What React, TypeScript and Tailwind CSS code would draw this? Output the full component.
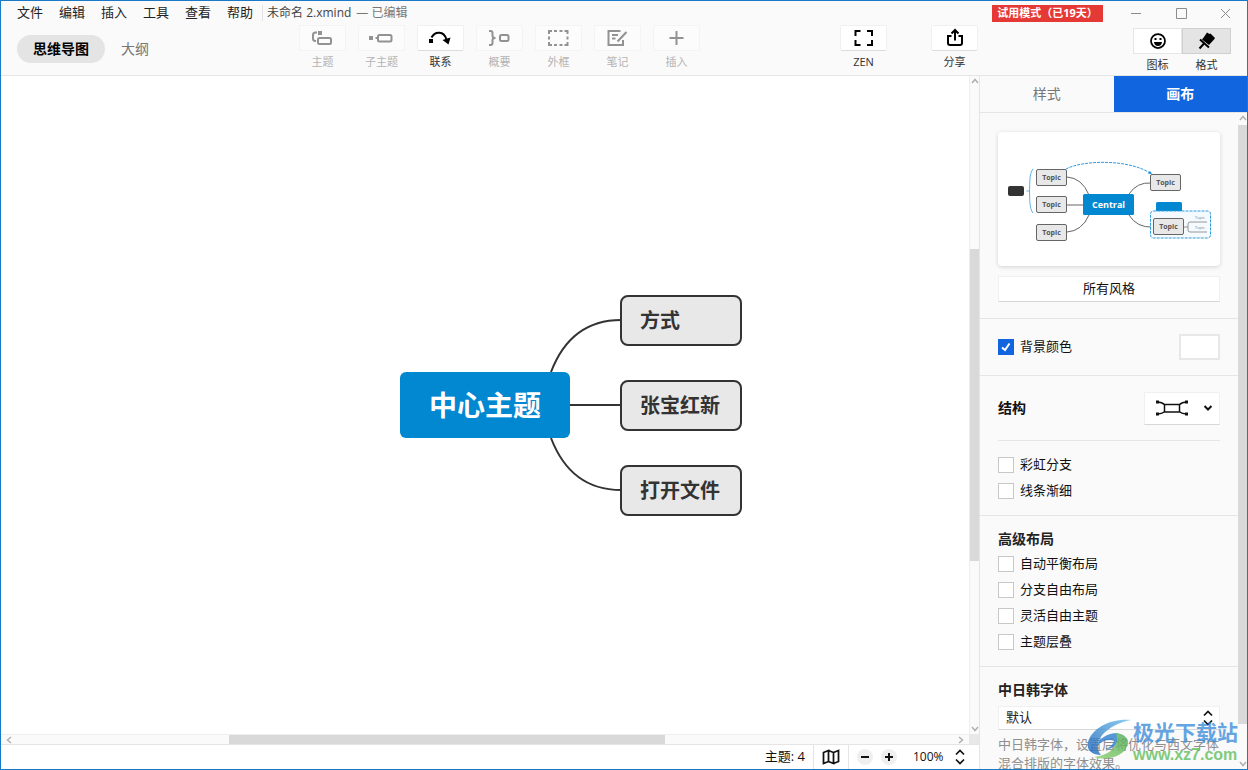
import React, { useState } from 'react';

interface ToolItem {
    label: string;
    active?: boolean;
    icon: React.ReactNode;
}

const TOOLS: ToolItem[] = [
    {
        label: '主题',
        icon: (
            <>
                <path d="M6 4.500H4.500Q2 4.500 2 7V10.500Q2 13 4.500 13H5" />
                <rect x="7" y="10" width="13" height="6" rx="1.500" />
                <rect x="7" y="3" width="4" height="4" fill="currentColor" stroke="none" />
            </>
        ),
    },
    {
        label: '子主题',
        icon: (
            <>
                <rect x="8" y="7" width="13.500" height="6.500" rx="1.500" />
                <path d="M5.500 10H8" />
                <rect x="-1" y="8" width="4" height="4" fill="currentColor" stroke="none" />
            </>
        ),
    },
    {
        label: '联系',
        active: true,
        icon: (
            <>
                <path d="M2.500 9.500C6 3 15 2.500 17.500 11.500" />
                <rect x="0" y="11" width="4" height="4" fill="currentColor" stroke="none" />
                <path d="M13.500 12L21.500 9.500L19.500 16.500Z" fill="currentColor" stroke="none" />
            </>
        ),
    },
    {
        label: '概要',
        icon: (
            <>
                <path d="M1 3H2.500Q4.500 3 4.500 5V8Q4.500 10 7.500 10Q4.500 10 4.500 12V15Q4.500 17 2.500 17H1" />
                <rect x="12" y="7" width="8.500" height="6" rx="1.500" />
            </>
        ),
    },
    {
        label: '外框',
        icon: <path d="M5 3H2V6M2 8.500V11.500M2 14V17H5M7 17H10M12.500 17H15.500M17.500 17H20.500V14M20.500 11.500V8.500M20.500 6V3H17.500M15.500 3H12.500M10 3H7" />,
    },
    {
        label: '笔记',
        icon: <path d="M14.500 3H2.500V17H17V12M6 7H12M6 10.500H9.500M20.500 4L11.500 13.500" />,
    },
    { label: '插入', icon: <path d="M11.500 3V17M4.500 10H18.500" /> },
];

const MENUS = ['文件', '编辑', '插入', '工具', '查看', '帮助'];

const ToolButton: React.FC<{ item: ToolItem }> = ({ item }) => {
    const { label, icon, active } = item;
    return (
        <button disabled={!active} className={`flex w-[47px] flex-col items-center ${active ? 'text-black' : 'text-[#929292]'}`}>
            <span className={`flex h-[26px] w-full items-center justify-center rounded-xs border ${active ? 'border-[#f0f0f0] border-b-[#dcdcdc] bg-white' : 'border-[#f4f4f4] bg-[#fcfcfc]'}`}>
                <svg width="23" height="20" viewBox="0 0 23 20" fill="none" stroke="currentColor" strokeWidth="2" className="overflow-visible">
                    {icon}
                </svg>
            </span>
            <span className={`mt-[3px] text-[11px] leading-4 ${active ? 'text-[#333]' : 'text-[#b4b4b4]'}`}>{label}</span>
        </button>
    );
};

const ZEN: ToolItem = {
    label: 'ZEN',
    active: true,
    icon: <path d="M8.500 3H3.500V8M15 3H20V8M8.500 17H3.500V12M15 17H20V12" />,
};

const SHARE: ToolItem = {
    label: '分享',
    active: true,
    icon: <path d="M8.500 8H5V15Q5 17 7 17H17Q19 17 19 15V8H15.500M12 12.500V3M8.500 5.500L12 2L15.500 5.500" />,
};

const TitleBar = () => (
    <div className="flex h-6 items-center text-[13px]">
        <nav className="flex gap-4 pl-4 text-[#222]">
            {MENUS.map((m) => (
                <button key={m}>{m}</button>
            ))}
        </nav>
        <span className="ml-[9px] h-4 w-px bg-[#e2e2e2]" />
        <span className="ml-1 text-xs text-[#444]">未命名 2.xmind</span>
        <span className="ml-[5px] text-xs text-[#777]">— 已编辑</span>
        <span className="mr-7 ml-auto flex h-[17px] w-[111px] items-center justify-center bg-[#e53935] text-[11px] font-bold text-white">
            试用模式（已19天）
        </span>
        <div className="flex w-[116px] items-center justify-between pr-4 text-[#8c8c8c]">
            <button aria-label="最小化">
                <svg width="11" height="11" stroke="currentColor" fill="none"><path d="M0 5.500H10" /></svg>
            </button>
            <button aria-label="最大化">
                <svg width="11" height="11" stroke="currentColor" fill="none"><path d="M.5 .5H10.500V10.500H.5Z" /></svg>
            </button>
            <button aria-label="关闭">
                <svg width="11" height="11" stroke="currentColor" fill="none"><path d="M1 1L10 10M10 1L1 10" /></svg>
            </button>
        </div>
    </div>
);

const Toolbar = () => (
    <div className="flex h-[50px] items-start">
        <div className="flex w-[298px] shrink-0 items-center pt-[10px] pl-4">
            <button className="h-7 w-[88px] rounded-full bg-[#e4e4e4] text-sm font-bold text-black">思维导图</button>
            <button className="ml-4 text-sm text-[#777]">大纲</button>
        </div>
        <div className="flex gap-3">
            {TOOLS.map((t) => (
                <ToolButton key={t.label} item={t} />
            ))}
        </div>
        <div className="mr-[155px] ml-auto flex gap-11">
            <ToolButton item={ZEN} />
            <ToolButton item={SHARE} />
        </div>
        <div className="mr-4 flex pt-[3px] text-[11px] text-[#333]">
            <button className="flex w-[49px] flex-col items-center">
                <span className="flex h-[26px] w-full items-center justify-center border border-[#e6e6e6] bg-white">
                    <svg width="18" height="18" viewBox="0 0 18 18" fill="none" stroke="#000" strokeWidth="1.750">
                        <circle cx="9" cy="9" r="7" />
                        <path d="M5 10H13Q12.500 14 9 14T5 10Z" fill="#000" stroke="none" />
                        <path d="M5.500 6H7.500V8H5.500ZM10.500 6H12.500V8H10.500Z" fill="#000" stroke="none" />
                    </svg>
                </span>
                <span className="mt-[3px] leading-4">图标</span>
            </button>
            <button className="flex w-[49px] flex-col items-center">
                <span className="flex h-[26px] w-full items-center justify-center border border-[#d0d0d0] bg-[#e4e4e4]">
                    <svg width="18" height="18" viewBox="0 0 18 18">
                        <path d="M9 .5L11.500 2L12.500 1.500L17 6L16 7.500L11 13L4 7.500L6 5Z" />
                        <path d="M2 7.500L11 15.500M6.500 11L1.500 16.500" stroke="#000" strokeWidth="2" />
                    </svg>
                </span>
                <span className="mt-[3px] leading-4">格式</span>
            </button>
        </div>
    </div>
);

const TOPICS = [
    { text: '方式', pos: 'top-[-110px]' },
    { text: '张宝红新', pos: 'top-[-25px]' },
    { text: '打开文件', pos: 'top-[60px]' },
];

const MindMap = () => (
    <div className="relative min-w-0 flex-1 overflow-hidden bg-white">
        <div className="absolute top-1/2 left-1/2">
            <svg className="absolute top-[-110px] left-0" width="140" height="220" viewBox="0 -110 140 220" fill="none" stroke="#333" strokeWidth="2">
                <path d="M66 -33C79 -67 102 -85 136 -85M66 33C79 67 102 85 136 85M85 0H136" />
            </svg>
            <div className="absolute top-[-33px] left-[-85px] flex h-[66px] w-[170px] items-center justify-center rounded-md bg-[#0288d1] text-[28px] font-bold text-white">
                中心主题
            </div>
            {TOPICS.map((t) => (
                <div key={t.text} className={`absolute left-[135px] flex h-[51px] w-[122px] items-center rounded-lg border-2 border-[#333] bg-[#e8e8e8] pl-[18px] text-xl font-bold text-[#333] ${t.pos}`}>
                    {t.text}
                </div>
            ))}
        </div>
    </div>
);

const Chevron: React.FC<{ d: string }> = ({ d }) => (
    <svg width="8" height="8" viewBox="0 0 8 8" fill="none" stroke="#b0b0b0" strokeWidth="1.500" className="shrink-0">
        <path d={d} />
    </svg>
);

const UP = 'M1 6L4 2.500L7 6';
const DOWN = 'M1 2L4 5.500L7 2';

const VScroll: React.FC<{ className: string; before: string; thumb: string; after: string }> = ({ className, before, thumb, after }) => (
    <div className={`flex shrink-0 flex-col items-center bg-[#fafafa] py-px ${className}`}>
        <Chevron d={UP} />
        <div className={before} />
        <div className={`w-full bg-[#d9d9d9] ${thumb}`} />
        <div className={after} />
        <Chevron d={DOWN} />
    </div>
);

const UpDown: React.FC<{ className: string }> = ({ className }) => (
    <svg width="10" height="16" viewBox="0 0 10 16" fill="none" stroke="#111" strokeWidth="1.750" className={`pointer-events-none absolute ${className}`}>
        <path d="M1 5.500L5 1.500L9 5.500M1 10.500L5 14.500L9 10.500" />
    </svg>
);

const StatusBar = () => (
    <div className="flex h-[25px] items-center border-t border-[#e5e5e5] bg-white text-[13px] text-[#111]">
        <span className="mr-2 ml-auto">主题: 4</span>
        <button aria-label="导航图" className="flex h-full w-9 items-center justify-center border-x border-[#e5e5e5]">
            <svg width="18" height="16" viewBox="0 0 18 16" fill="none" stroke="#111" strokeWidth="1.750">
                <path d="M1.500 3.500L6.500 1.500V12.500L1.500 14.500ZM6.500 1.500L11.500 3.500V14.500L6.500 12.500M11.500 3.500L16.500 1.500V12.500L11.500 14.500" />
            </svg>
        </button>
        <button aria-label="缩小" className="ml-2 flex size-4 items-center justify-center rounded-full bg-[#efefef]">
            <svg width="10" height="10" stroke="#111" strokeWidth="2"><path d="M1 5H9" /></svg>
        </button>
        <button aria-label="放大" className="ml-2 flex size-4 items-center justify-center rounded-full bg-[#efefef]">
            <svg width="10" height="10" stroke="#111" strokeWidth="2"><path d="M1 5H9M5 1V9" /></svg>
        </button>
        <label className="relative ml-4 flex items-center pr-[6px]">
            <select aria-label="缩放" className="w-[60px] appearance-none bg-transparent text-xs">
                <option>100%</option>
            </select>
            <UpDown className="right-[14px]" />
        </label>
    </div>
);

const Topic: React.FC<{ x: number; y: number }> = ({ x, y }) => (
    <g>
        <rect x={x} y={y} width="30" height="16" rx="1.500" fill="#e8e8e8" stroke="#666" />
        <text x={x + 15} y={y + 10} fontSize="7" fontWeight="bold" fill="#555" textAnchor="middle">Topic</text>
    </g>
);

const StylePreview = () => (
    <svg viewBox="0 0 222 134" className="block w-full rounded bg-white shadow-[0_1px_4px_rgba(0,0,0,0.16)]" fill="none">
        <path d="M69 45Q84 46 91 63M69 73H86M69 100Q84 99 91 83M131 62Q139 50 153 51M131 83Q139 96 155 95" stroke="#666" />
        <path d="M68 37C85 28 130 27 152 41" stroke="#2e9bdb" strokeDasharray="3 1" />
        <path d="M150 41.500L154 42L152 39Z" fill="#0288d1" />
        <path d="M35 37C31 42 32 51 31.500 59C32 67 31 76 35 81M28.500 59H31" stroke="#5db3e4" />
        <rect x="10" y="54" width="16" height="10" rx="2" fill="#333" />
        <rect x="158" y="70" width="26" height="12" rx="1.500" fill="#0288d1" />
        <rect x="152.500" y="79" width="60" height="27" rx="3" fill="#f5fafe" stroke="#2e9bdb" strokeDasharray="3 1" />
        <path d="M186 95H190M209 90H192Q190 90 190 92V98Q190 100 192 100H209" stroke="#777" strokeWidth=".75" />
        <text x="202" y="87" fontSize="4" fill="#777" textAnchor="middle">Topic</text>
        <text x="202" y="97" fontSize="4" fill="#777" textAnchor="middle">Topic</text>
        <Topic x={38.5} y={37.5} />
        <Topic x={38.5} y={64.5} />
        <Topic x={38.5} y={92.5} />
        <Topic x={152.5} y={42.5} />
        <Topic x={155.5} y={86.5} />
        <rect x="85" y="62" width="51" height="21" rx="1.500" fill="#0288d1" />
        <text x="110.500" y="76" fontSize="9" fontWeight="bold" fill="#fff" textAnchor="middle">Central</text>
    </svg>
);

const Check: React.FC<{ label: string; initial?: boolean }> = ({ label, initial = false }) => {
    const [on, setOn] = useState(initial);
    return (
        <label className="flex h-4 items-center gap-[6px] text-[13px] text-[#111]">
            <span className="grid">
                <input
                    type="checkbox"
                    checked={on}
                    onChange={() => setOn(!on)}
                    className="col-start-1 row-start-1 size-4 appearance-none border border-[#c8c8c8] bg-white checked:border-[#1166e0] checked:bg-[#1166e0]"
                />
                {on && (
                    <svg width="16" height="16" fill="none" stroke="#fff" strokeWidth="2" className="pointer-events-none col-start-1 row-start-1">
                        <path d="M4 8.500L7 11L11.500 4.500" />
                    </svg>
                )}
            </span>
            {label}
        </label>
    );
};

const CanvasPanel = () => (
    <div className="min-w-0 flex-1 overflow-hidden">
        <section className="border-b border-[#e5e5e5] px-[18px] pt-[19px] pb-4">
            <StylePreview />
            <button className="mt-[10px] h-[26px] w-full border border-[#f0f0f0] border-b-[#d8d8d8] bg-white text-[13px] text-[#111]">所有风格</button>
        </section>
        <section className="flex h-[57px] items-center justify-between border-b border-[#e5e5e5] px-[18px]">
            <Check label="背景颜色" initial />
            <button aria-label="选择背景颜色" className="h-[26px] w-[41px] border-2 border-[#e8e8e8] bg-white" />
        </section>
        <section className="border-b border-[#e5e5e5] px-[18px]">
            <div className="flex h-[65px] items-center justify-between border-b border-[#e5e5e5]">
                <label htmlFor="structure" className="text-sm font-bold text-[#111]">结构</label>
                <div className="relative flex items-center">
                    <select id="structure" className="h-[33px] w-[76px] appearance-none border border-[#f0f0f0] border-b-[#d8d8d8] bg-white">
                        <option value="map" aria-label="思维导图" />
                    </select>
                    <svg width="66" height="18" viewBox="0 0 66 18" fill="none" stroke="#111" strokeWidth="1.500" className="pointer-events-none absolute left-[10px]">
                        <path d="M10.500 5.500H25.500V13H10.500ZM3 3Q8 3 11 6M3 15Q8 15 11 12.500M33 3Q28 3 25 6M33 15Q28 15 25 12.500" />
                        <path d="M2 1.500H5V4.500H2ZM2 13.500H5V16.500H2ZM31 1.500H34V4.500H31ZM31 13.500H34V16.500H31Z" fill="#111" stroke="none" />
                        <path d="M50.500 7L54 10.500L57.500 7" strokeWidth="2" />
                    </svg>
                </div>
            </div>
            <div className="flex flex-col gap-[10px] py-4">
                <Check label="彩虹分支" />
                <Check label="线条渐细" />
            </div>
        </section>
        <section className="border-b border-[#e5e5e5] px-[18px] pt-[13px] pb-4">
            <h2 className="text-sm leading-5 font-bold text-[#222]">高级布局</h2>
            <div className="mt-[7px] flex flex-col gap-[10px]">
                <Check label="自动平衡布局" />
                <Check label="分支自由布局" />
                <Check label="灵活自由主题" />
                <Check label="主题层叠" />
            </div>
        </section>
        <section className="px-[18px] pt-[13px]">
            <label htmlFor="cjk-font" className="block text-sm leading-5 font-bold text-[#222]">中日韩字体</label>
            <div className="relative mt-[6px] flex items-center">
                <select id="cjk-font" className="h-6 w-full appearance-none border border-[#f0f0f0] border-b-[#d8d8d8] bg-white pl-[7px] text-[13px] text-[#222]">
                    <option>默认</option>
                </select>
                <UpDown className="right-[7px]" />
            </div>
            <p className="mt-[5px] text-[13px] leading-[19px] text-[#8f8f8f]">中日韩字体，设置后将优化与西文字体混合排版的字体效果。</p>
        </section>
    </div>
);

const Watermark = () => (
    <div className="pointer-events-none absolute right-[9px] bottom-1 flex items-start font-bold opacity-80">
        <svg width="46" height="44" viewBox="0 0 46 44">
            <defs>
                <linearGradient id="swoosh" x1="0" y1="1" x2="1" y2="0">
                    <stop offset="0" stopColor="#1a63b8" />
                    <stop offset="1" stopColor="#6cc0ee" />
                </linearGradient>
                <linearGradient id="leaf" x1="0" y1="1" x2="1" y2="0">
                    <stop offset="0" stopColor="#8fd06a" />
                    <stop offset="1" stopColor="#4bab5a" />
                </linearGradient>
            </defs>
            <path d="M44 1C24 -1 5 9 1 23C-1 31 5 36 14 36C4 24 18 6 44 1Z" fill="url(#swoosh)" />
            <path d="M31 14C20 14 11 20 10 27C16 21 22 20 27 22C26 26 22 29 18 30C25 31 32 25 33 19Z" fill="#2f7fcd" />
            <path d="M7 38C24 36 33 26 29 14C37 15 42 19 41 25C38 36 22 43 7 38Z" fill="url(#leaf)" />
        </svg>
        <div className="flex flex-col">
            <span className="text-[21px] leading-[26px] text-[#3f8fdc]">极光下载站</span>
            <span className="font-['Liberation_Sans'] text-base leading-5 text-[#62bf5c]">www.xz7.com</span>
        </div>
    </div>
);

const App: React.FC = () => (
    <div className="relative flex h-screen flex-col overflow-hidden border border-[#1a7ac8] bg-[#fafafa] font-['Open_Sans','Noto_Sans_CJK_SC',sans-serif]">
        <header className="border-b border-[#e5e5e5]">
            <TitleBar />
            <Toolbar />
        </header>
        <div className="flex min-h-0 flex-1">
            <main className="flex min-w-0 flex-1 flex-col">
                <div className="flex min-h-0 flex-1">
                    <MindMap />
                    <VScroll className="w-[10px] border-l border-[#eee]" before="grow-[164]" thumb="grow-[312]" after="grow-[164]" />
                </div>
                <div className="flex h-[10px] items-stretch bg-[#fafafa]">
                    <div className="flex min-w-0 flex-1 items-center border-t border-[#eee] px-1">
                        <Chevron d="M6 1L2.500 4L6 7" />
                        <div className="grow-[216]" />
                        <div className="h-full grow-[435] bg-[#d9d9d9]" />
                        <div className="grow-[292]" />
                        <Chevron d="M2 1L5.500 4L2 7" />
                    </div>
                    <div className="w-[10px] bg-[#e8e8e8]" />
                </div>
                <StatusBar />
            </main>
            <aside className="flex w-[268px] shrink-0 flex-col border-l border-[#e5e5e5]">
                <div className="flex h-[37px] border-b border-[#e5e5e5] text-sm">
                    <button className="flex-1 text-[#777]">样式</button>
                    <button className="h-9 flex-1 bg-[#1166e0] font-bold text-white">画布</button>
                </div>
                <div className="flex min-h-0 flex-1">
                    <CanvasPanel />
                    <VScroll className="w-[9px]" before="h-[3px]" thumb="grow-[600]" after="grow-[36]" />
                </div>
            </aside>
        </div>
        <Watermark />
    </div>
);

export default App;
